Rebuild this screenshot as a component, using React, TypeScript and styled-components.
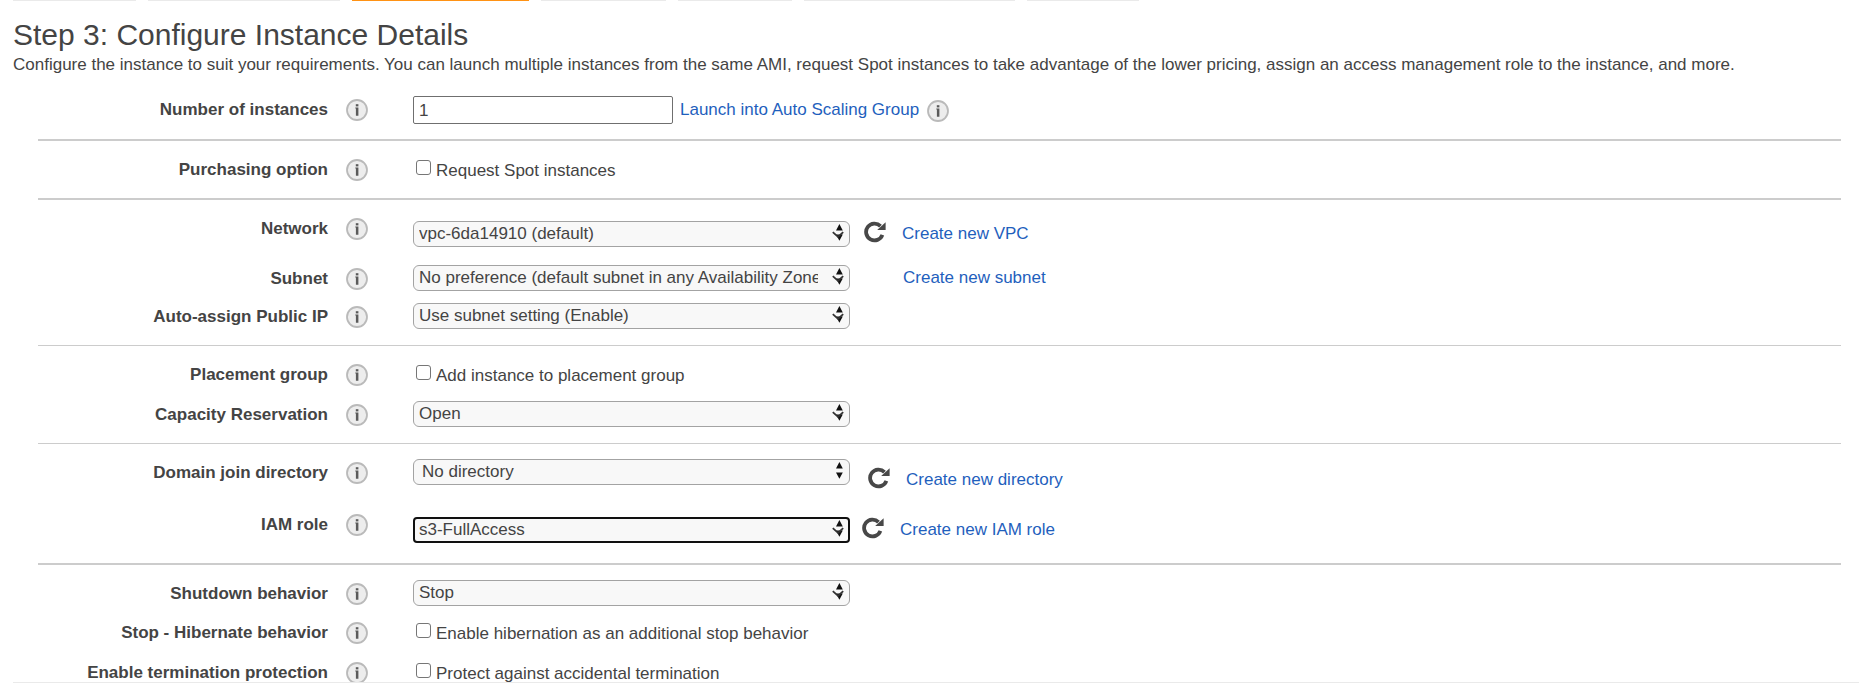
import React, { useId } from "react";
import styled, { createGlobalStyle } from "styled-components";

const GlobalStyle = createGlobalStyle`
  *, *::before, *::after { box-sizing: border-box; }
  body {
    margin: 0;
    background: #fff;
    color: #444;
    font-family: "Liberation Sans", Arial, sans-serif;
    font-size: 17px;
    line-height: 20px;
  }
`;

const Page = styled.main`
  display: flex;
  flex-direction: column;
  height: 100vh;
  padding-bottom: 1px;
`;

const StepTabs = styled.nav`
  display: flex;
  flex: none;
  gap: 12px;
  padding-left: 13px;
`;

const StepTab = styled.span<{ $width: number; $active?: boolean }>`
  width: ${(p) => p.$width}px;
  height: 1px;
  background: ${(p) => (p.$active ? "#ff9214" : "#eaeaea")};
`;

const Content = styled.div`
  flex: 1;
  min-height: 0;
  overflow: hidden;
  margin-left: 13px;
  border-bottom: 1px solid #eaeaea;
`;

const Title = styled.h1`
  margin: 0;
  padding-top: 16px;
  font-size: 30px;
  font-weight: 400;
  line-height: 36px;
`;

const Description = styled.p`
  margin: 0 0 6px;
  padding-top: 2px;
`;

const Form = styled.form`
  margin: 0 18px 0 25px;
`;

const Section = styled.section<{ $rule?: number }>`
  display: flex;
  flex-direction: column;
  gap: 12px;
  padding: 15px 0;
  border-bottom: ${(p) => p.$rule ?? 0}px solid #ccc;
`;

const Row = styled.div<{ $height?: number }>`
  display: grid;
  grid-template-columns: 290px 22px minmax(0, 1fr);
  column-gap: 18px;
  align-items: start;
  min-height: ${(p) => p.$height ?? 27}px;
`;

const Label = styled.label`
  padding-top: 4px;
  font-weight: 700;
  text-align: right;
`;

const InfoButton = styled.button`
  display: block;
  width: 22px;
  height: 22px;
  margin-top: 3px;
  padding: 0;
  border: 0;
  background: none;
`;

const Control = styled.div<{ $lowered?: boolean }>`
  display: flex;
  align-items: flex-start;
  padding-left: 27px;
  padding-top: ${(p) => (p.$lowered ? 6 : 0)}px;
`;

const TextInput = styled.input`
  width: 260px;
  height: 28px;
  padding: 1px 5px 0;
  border: 1px solid #6f6f6f;
  border-radius: 2px;
  background: #fff;
  color: #444;
  font: inherit;
`;

const SelectBox = styled.div`
  position: relative;
  flex: none;
  width: 437px;
`;

const Select = styled.select<{ $focused?: boolean; $inset?: boolean }>`
  appearance: none;
  display: block;
  width: 100%;
  height: 26px;
  padding: 0 ${(p) => (p.$focused ? 30 : 31)}px 0 ${(p) => (p.$inset ? 8 : p.$focused ? 4 : 5)}px;
  border: ${(p) => (p.$focused ? "2px solid #101010" : "1px solid #a3a3a3")};
  border-radius: ${(p) => (p.$focused ? 4 : 6)}px;
  background: #f8f8f8;
  color: #444;
  font: inherit;
  line-height: 20px;
  outline: none;
`;

const Arrows = styled.svg`
  position: absolute;
  top: 2px;
  right: 6px;
  pointer-events: none;
`;

const Aside = styled.div<{ $indent?: number; $drop?: boolean }>`
  display: flex;
  align-items: center;
  gap: 16px;
  height: 26px;
  margin-left: ${(p) => p.$indent ?? 14}px;
  margin-top: ${(p) => (p.$drop ? 8 : 0)}px;
`;

const RefreshButton = styled.button`
  display: block;
  width: 22px;
  height: 26px;
  padding: 0 0 4px;
  border: 0;
  background: none;

  svg { display: block; }
`;

const Link = styled.a`
  color: #1f5fbd;
  text-decoration: none;
`;

const Check = styled.label`
  display: flex;
  align-items: flex-start;
  padding: 4px 0 0 3px;
  line-height: 22px;
`;

const Checkbox = styled.input`
  appearance: none;
  width: 15px;
  height: 15px;
  margin: 0 5px 0 0;
  border: 1px solid #767676;
  border-radius: 3px;
  background: #fff;
`;

const InlineInfo = styled.div`
  display: flex;
  align-items: center;
  gap: 8px;
  padding: 1px 0 0 7px;
`;

function Info({ about }: { about: string }) {
  return (
    <InfoButton type="button" aria-label={`About ${about}`}>
      <svg width="22" height="22" viewBox="0 0 22 22">
        <circle cx="11" cy="11" r="10" fill="#ededed" stroke="#bababa" strokeWidth="1.8" />
        <rect x="9.8" y="5.2" width="2.6" height="2.2" fill="#5a5a5a" />
        <path d="M9.3 8.6h3.1V16.8H9.9V9.4H9.3z" fill="#5a5a5a" />
      </svg>
    </InfoButton>
  );
}

function Refresh({ label }: { label: string }) {
  return (
    <RefreshButton type="button" aria-label={`Refresh ${label}`}>
      <svg width="22" height="22" viewBox="0 0 22 22">
        <path d="M16.5 5.1A8.4 8.4 0 1 0 18.4 13.9" fill="none" stroke="#484848" strokeWidth="3.8" />
        <path d="M21.6 1.2V9H13.2z" fill="#484848" />
      </svg>
    </RefreshButton>
  );
}

type SelectProps = { id: string; value: string; focused?: boolean; inset?: boolean };

function SelectField({ id, value, focused, inset }: SelectProps) {
  return (
    <SelectBox>
      <Select id={id} $focused={focused} $inset={inset}>
        <option>{value}</option>
      </Select>
      <Arrows width="12" height="19" viewBox="0 0 12 19" aria-hidden="true">
        <path d="M7.4 1L10.8 7.4H4z M4 11.4H10.8L7.4 17.8z" fill="#111" />
        {!inset && <path d="M0.8 9.2L6 13.8L11.2 9.2" fill="none" stroke="#333" strokeWidth="1.8" />}
      </Arrows>
    </SelectBox>
  );
}

type FieldProps = {
  label: string;
  height?: number;
  lowered?: boolean;
  children: (id: string) => React.ReactNode;
};

function Field({ label, height, lowered, children }: FieldProps) {
  const id = useId();
  return (
    <Row $height={height}>
      <Label htmlFor={id}>{label}</Label>
      <Info about={label} />
      <Control $lowered={lowered}>{children(id)}</Control>
    </Row>
  );
}

function CheckField({ id, text }: { id: string; text: string }) {
  return (
    <Check>
      <Checkbox id={id} type="checkbox" />
      {text}
    </Check>
  );
}

const steps = [123, 192, 177, 125, 114, 211, 112];

export default function App() {
  return (
    <>
      <GlobalStyle />
      <Page>
        <StepTabs aria-label="Wizard steps">
          {steps.map((width, i) => (
            <StepTab key={i} $width={width} $active={i === 2} />
          ))}
        </StepTabs>
        <Content>
          <Title>Step 3: Configure Instance Details</Title>
          <Description>
            Configure the instance to suit your requirements. You can launch multiple instances from the same AMI,
            request Spot instances to take advantage of the lower pricing, assign an access management role to the
            instance, and more.
          </Description>
          <Form>
            <Section $rule={2}>
              <Field label="Number of instances" height={28}>
                {(id) => (
                  <>
                    <TextInput id={id} type="text" defaultValue="1" />
                    <InlineInfo>
                      <Link href="#auto-scaling">Launch into Auto Scaling Group</Link>
                      <Info about="Auto Scaling Group" />
                    </InlineInfo>
                  </>
                )}
              </Field>
            </Section>
            <Section $rule={2}>
              <Field label="Purchasing option">{(id) => <CheckField id={id} text="Request Spot instances" />}</Field>
            </Section>
            <Section $rule={1}>
              <Field label="Network" height={38} lowered>
                {(id) => (
                  <>
                    <SelectField id={id} value="vpc-6da14910 (default)" />
                    <Aside>
                      <Refresh label="networks" />
                      <Link href="#vpc">Create new VPC</Link>
                    </Aside>
                  </>
                )}
              </Field>
              <Field label="Subnet" height={26}>
                {(id) => (
                  <>
                    <SelectField id={id} value="No preference (default subnet in any Availability Zone)" />
                    <Aside $indent={53}>
                      <Link href="#subnet">Create new subnet</Link>
                    </Aside>
                  </>
                )}
              </Field>
              <Field label="Auto-assign Public IP">
                {(id) => <SelectField id={id} value="Use subnet setting (Enable)" />}
              </Field>
            </Section>
            <Section $rule={1}>
              <Field label="Placement group" height={28}>
                {(id) => <CheckField id={id} text="Add instance to placement group" />}
              </Field>
              <Field label="Capacity Reservation">{(id) => <SelectField id={id} value="Open" />}</Field>
            </Section>
            <Section $rule={2}>
              <Field label="Domain join directory" height={40}>
                {(id) => (
                  <>
                    <SelectField id={id} value="No directory" inset />
                    <Aside $indent={18} $drop>
                      <Refresh label="directories" />
                      <Link href="#directory">Create new directory</Link>
                    </Aside>
                  </>
                )}
              </Field>
              <Field label="IAM role" height={37} lowered>
                {(id) => (
                  <>
                    <SelectField id={id} value="s3-FullAccess" focused />
                    <Aside $indent={12}>
                      <Refresh label="IAM roles" />
                      <Link href="#iam-role">Create new IAM role</Link>
                    </Aside>
                  </>
                )}
              </Field>
            </Section>
            <Section>
              <Field label="Shutdown behavior">{(id) => <SelectField id={id} value="Stop" />}</Field>
              <Field label="Stop - Hibernate behavior" height={28}>
                {(id) => <CheckField id={id} text="Enable hibernation as an additional stop behavior" />}
              </Field>
              <Field label="Enable termination protection">
                {(id) => <CheckField id={id} text="Protect against accidental termination" />}
              </Field>
            </Section>
          </Form>
        </Content>
      </Page>
    </>
  );
}
